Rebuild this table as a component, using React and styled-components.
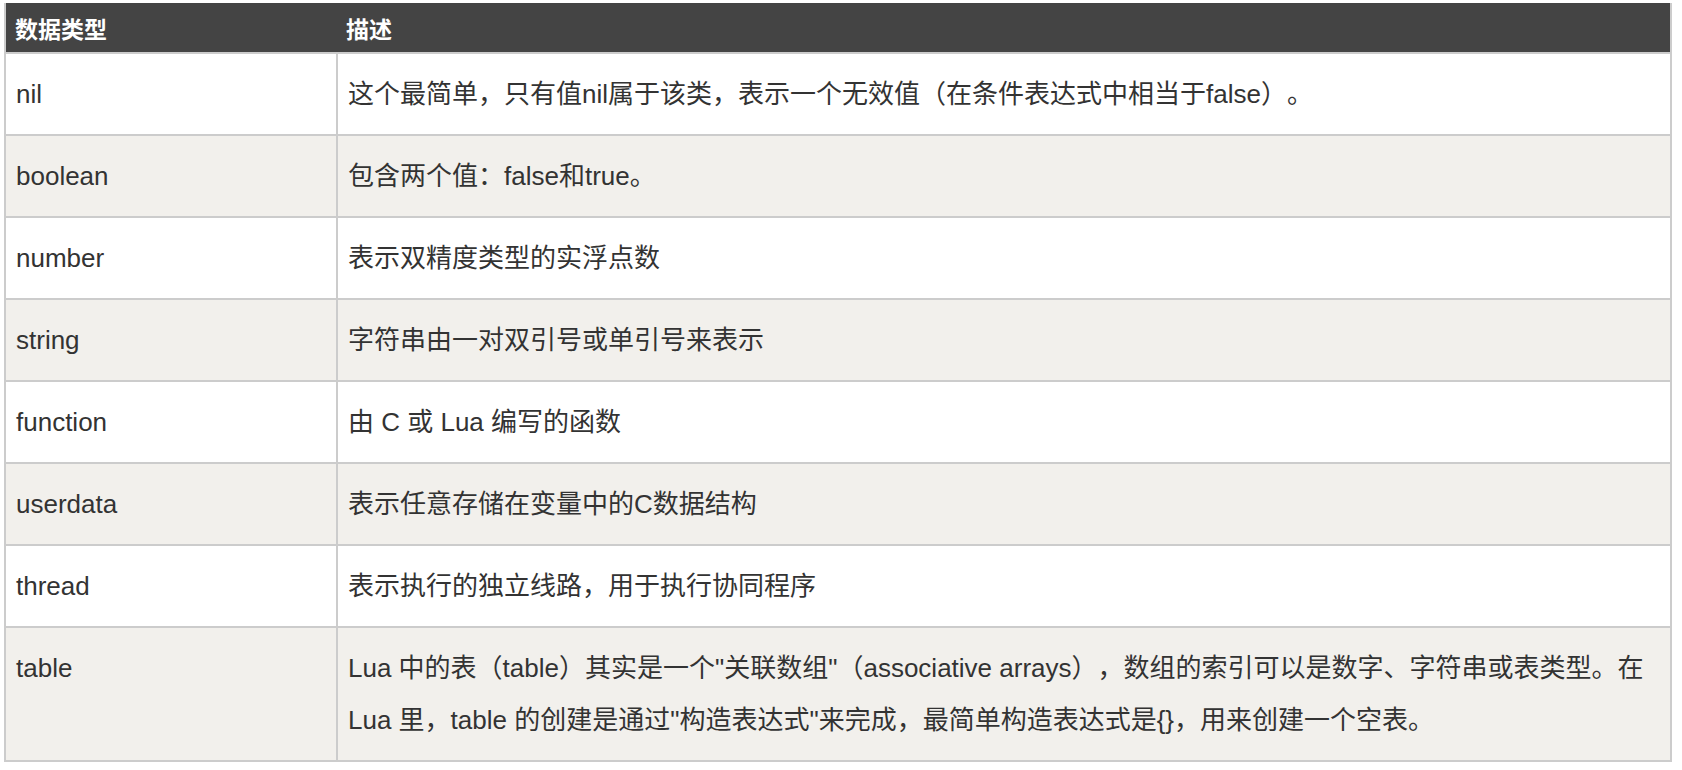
import React from 'react';
import styled, { createGlobalStyle } from 'styled-components';

const GlobalStyle = createGlobalStyle`
  html, body {
    margin: 0;
    padding: 0;
    background: #ffffff;
  }
  body {
    font-family: "Liberation Sans", "Noto Sans CJK SC", sans-serif;
  }
`;

const Page = styled.div`
  padding: 3px 10px 8px 4px;
`;

const TypeTable = styled.table`
  width: 1668px;
  border-collapse: collapse;
  table-layout: fixed;
  border: 2px solid #cccccc;
  border-top: none;
  font-family: "Liberation Sans", "Noto Sans CJK SC", sans-serif;
  text-spacing-trim: space-all;
`;

const HeadCell = styled.th`
  background: #444444;
  color: #ffffff;
  font-size: 23px;
  font-weight: bold;
  text-align: left;
  height: 50px;
  padding: 0 9px;
  box-sizing: border-box;
  border: none;
  width: ${(p) => p.$width || 'auto'};
`;

const Row = styled.tr`
  background: ${(p) => (p.$alt ? '#f2f0ec' : '#ffffff')};
`;

const Cell = styled.td`
  border: 2px solid #cccccc;
  padding: 14px 10px;
  font-size: 26px;
  line-height: 52px;
  color: #333333;
  vertical-align: top;
`;

const rows = [
  ['nil', '这个最简单，只有值nil属于该类，表示一个无效值（在条件表达式中相当于false）。'],
  ['boolean', '包含两个值：false和true。'],
  ['number', '表示双精度类型的实浮点数'],
  ['string', '字符串由一对双引号或单引号来表示'],
  ['function', '由 C 或 Lua 编写的函数'],
  ['userdata', '表示任意存储在变量中的C数据结构'],
  ['thread', '表示执行的独立线路，用于执行协同程序'],
  [
    'table',
    'Lua 中的表（table）其实是一个"关联数组"（associative arrays），数组的索引可以是数字、字符串或表类型。在 Lua 里，table 的创建是通过"构造表达式"来完成，最简单构造表达式是{}，用来创建一个空表。',
  ],
];

export default function App() {
  return (
    <>
      <GlobalStyle />
      <Page>
        <TypeTable>
          <thead>
            <tr>
              <HeadCell $width="332px">数据类型</HeadCell>
              <HeadCell>描述</HeadCell>
            </tr>
          </thead>
          <tbody>
            {rows.map(([type, desc], i) => (
              <Row key={type} $alt={i % 2 === 1}>
                <Cell>{type}</Cell>
                <Cell>{desc}</Cell>
              </Row>
            ))}
          </tbody>
        </TypeTable>
      </Page>
    </>
  );
}
